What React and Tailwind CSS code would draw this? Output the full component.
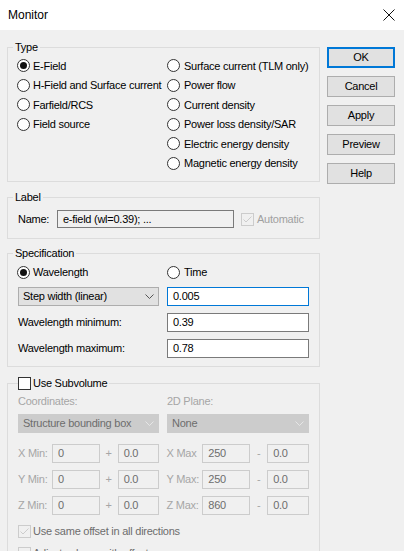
import React from "react";

const font = { fontFamily: '"Liberation Sans", Arial, sans-serif' };

function Radio({ checked }) {
  return (
    <span className="w-[13px] h-[13px] rounded-full border border-[#333333] bg-white flex items-center justify-center shrink-0">
      {checked && <span className="w-[7px] h-[7px] rounded-full bg-[#111111]" />}
    </span>
  );
}

function Check({ checked, disabled }) {
  return (
    <span
      className={`w-[13px] h-[13px] border flex items-center justify-center shrink-0 ${
        disabled ? "border-[#cccccc] bg-[#f0f0f0]" : "border-[#333333] bg-white"
      }`}
    >
      {checked && (
        <svg width="11" height="11" viewBox="0 0 11 11" fill="none">
          <path d="M1.5 5.5 L4 8 L9.5 2.5" stroke={disabled ? "#cccccc" : "#333333"} strokeWidth="1" />
        </svg>
      )}
    </span>
  );
}

function Chevron({ disabled }) {
  return (
    <svg width="9" height="5" viewBox="0 0 9 5" fill="none">
      <path d="M0.5 0.5 L4.5 4.5 L8.5 0.5" stroke={disabled ? "#e6e6e6" : "#555555"} strokeWidth="1" />
    </svg>
  );
}

function Combo({ text, width, disabled }) {
  return (
    <div
      className={`${width} h-[19px] border flex items-center justify-between pl-[4px] pr-[4px] ${
        disabled ? "bg-[#cccccc] border-[#cccccc] text-[#6d6d6d]" : "bg-[#e1e1e1] border-[#adadad] text-black"
      }`}
    >
      <span>{text}</span>
      <Chevron disabled={disabled} />
    </div>
  );
}

function Field({ value, width, focused, disabled, readOnly, height = "h-[19px]" }) {
  let cls = "bg-white border-[#7a7a7a] text-black";
  if (focused) cls = "bg-white border-[#0078d7] text-black";
  if (readOnly) cls = "bg-[#f0f0f0] border-[#7a7a7a] text-black";
  if (disabled) cls = "bg-[#f0f0f0] border-[#cccccc] text-[#6d6d6d]";
  return (
    <div className={`${width} ${height} border flex items-center pl-[5px] ${cls}`}>
      {value}
    </div>
  );
}

function Button({ label, primary }) {
  return (
    <div
      className={`w-[68px] h-[21px] flex items-center justify-center bg-[#e1e1e1] ${
        primary ? "border-2 border-[#0078d7]" : "border border-[#adadad]"
      }`}
    >
      {label}
    </div>
  );
}

const TYPES_LEFT = ["E-Field", "H-Field and Surface current", "Farfield/RCS", "Field source"];
const TYPES_RIGHT = [
  "Surface current (TLM only)",
  "Power flow",
  "Current density",
  "Power loss density/SAR",
  "Electric energy density",
  "Magnetic energy density",
];

const fieldsetCls = "border border-[#dcdcdc] px-[10px] min-w-0";
const legendCls = "-ml-[5px] px-[2px] leading-[14px]";

function BoundsRow({ axis, min, max, sep }) {
  return (
    <div className="flex items-center h-[19px]">
      <span className="w-[34px] text-[#a6a6a6]">{axis} Min:</span>
      <Field value={min} width="w-[48px]" disabled />
      <span className="w-[18px] text-center text-[#a6a6a6]">+</span>
      <Field value="0.0" width="w-[41px]" disabled />
      <span className="w-[8px]" />
      <span className="w-[36px] text-[#a6a6a6]">{axis} Max{sep}</span>
      <Field value={max} width="w-[48px]" disabled />
      <span className="w-[17px] text-center text-[#a6a6a6]">-</span>
      <Field value="0.0" width="w-[42px]" disabled />
    </div>
  );
}

export default function App() {
  return (
    <div
      className="w-[404px] h-[551px] overflow-hidden bg-[#f0f0f0] text-[11px] tracking-[-0.25px] text-black"
      style={font}
    >
      {/* title bar */}
      <div className="h-[30px] bg-white flex items-center justify-between pl-[8px] pr-[9px] text-[12px] tracking-normal">
        <span>Monitor</span>
        <svg width="12" height="12" viewBox="0 0 12 12" fill="none">
          <path d="M0.5 0.5 L11.5 11.5 M11.5 0.5 L0.5 11.5" stroke="#111111" strokeWidth="1" />
        </svg>
      </div>

      <div className="flex gap-[7px] pt-[10px] pl-[7px]">
        {/* left column */}
        <div className="w-[313px] flex flex-col">
          <fieldset className={fieldsetCls}>
            <legend className={legendCls}>Type</legend>
            <div className="pt-[2px] pb-[8px] grid grid-cols-[150px_1fr] -ml-[1px]">
              <div className="flex flex-col">
                {TYPES_LEFT.map((t, i) => (
                  <div key={t} className="h-[19.5px] flex items-center gap-[3px]">
                    <Radio checked={i === 0} />
                    <span>{t}</span>
                  </div>
                ))}
              </div>
              <div className="flex flex-col">
                {TYPES_RIGHT.map((t) => (
                  <div key={t} className="h-[19.5px] flex items-center gap-[4px]">
                    <Radio />
                    <span>{t}</span>
                  </div>
                ))}
              </div>
            </div>
          </fieldset>

          <fieldset className={`${fieldsetCls} mt-[8px]`}>
            <legend className={legendCls}>Label</legend>
            <div className="pt-[6px] pb-[10px] flex items-center">
              <span className="w-[39px]">Name:</span>
              <Field value="e-field (wl=0.39); ..." width="w-[177px]" height="h-[18px]" readOnly />
              <span className="ml-[7px] flex items-center gap-[3px] text-[#a0a0a0]">
                <Check checked disabled />
                Automatic
              </span>
            </div>
          </fieldset>

          <fieldset className={`${fieldsetCls} mt-[7px]`}>
            <legend className={legendCls}>Specification</legend>
            <div className="pt-[2px] pb-[8px] flex flex-col">
              <div className="h-[20px] flex items-center -ml-[1px]">
                <span className="w-[150px] flex items-center gap-[3px]">
                  <Radio checked />
                  Wavelength
                </span>
                <span className="flex items-center gap-[4px]">
                  <Radio />
                  Time
                </span>
              </div>
              <div className="mt-[5px] flex items-center gap-[8px]">
                <Combo text="Step width (linear)" width="w-[141px]" />
                <Field value="0.005" width="w-[142px]" focused />
              </div>
              <div className="mt-[7px] flex items-center">
                <span className="w-[149px]">Wavelength minimum:</span>
                <Field value="0.39" width="w-[142px]" />
              </div>
              <div className="mt-[7px] flex items-center">
                <span className="w-[149px]">Wavelength maximum:</span>
                <Field value="0.78" width="w-[142px]" />
              </div>
            </div>
          </fieldset>

          <fieldset className={`${fieldsetCls} mt-[9px]`}>
            <legend className="pr-[2px] leading-[14px] flex items-center gap-[2px]">
              <Check />
              <span>Use Subvolume</span>
            </legend>
            <div className="pt-[4px] flex flex-col">
              <div className="h-[14px] flex items-center text-[#a6a6a6]">
                <span className="w-[149px]">Coordinates:</span>
                <span>2D Plane:</span>
              </div>
              <div className="mt-[6px] flex items-center gap-[8px]">
                <Combo text="Structure bounding box" width="w-[141px]" disabled />
                <Combo text="None" width="w-[142px]" disabled />
              </div>
              <div className="mt-[11px] flex flex-col gap-[7px]">
                <BoundsRow axis="X" min="0" max="250" sep="" />
                <BoundsRow axis="Y" min="0" max="250" sep=":" />
                <BoundsRow axis="Z" min="0" max="860" sep=":" />
              </div>
              <div className="mt-[8px] flex flex-col gap-[6px]">
                <div className="h-[16px] flex items-center gap-[2px] text-[#6d6d6d]">
                  <Check checked disabled />
                  <span>Use same offset in all directions</span>
                </div>
                <div className="h-[16px] flex items-center gap-[2px] text-[#6d6d6d]">
                  <Check disabled />
                  <span>Adjust volume with offset</span>
                </div>
              </div>
            </div>
          </fieldset>
        </div>

        {/* buttons */}
        <div className="mt-[7px] flex flex-col gap-[8px]">
          <Button label="OK" primary />
          <Button label="Cancel" />
          <Button label="Apply" />
          <Button label="Preview" />
          <Button label="Help" />
        </div>
      </div>
    </div>
  );
}
